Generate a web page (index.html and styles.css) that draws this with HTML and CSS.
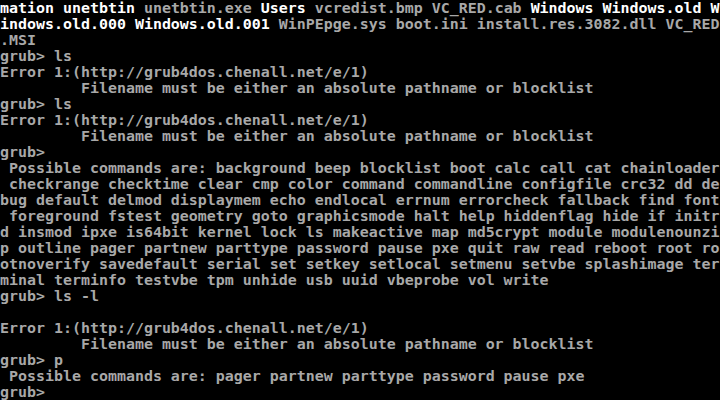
FILE: index.html
```html
<!DOCTYPE html>
<html>
<head>
<meta charset="utf-8">
<link rel="stylesheet" href="styles.css">
</head>
<body>
<pre class="console"><span class="hi">mation unetbtin</span> unetbtin.exe <span class="hi">Users</span> vcredist.bmp VC_RED.cab <span class="hi">Windows Windows.old W</span>
<span class="hi">indows.old.000 Windows.old.001</span> WinPEpge.sys boot.ini install.res.3082.dll VC_RED
.MSI
grub&gt; ls
Error 1:(http://grub4dos.chenall.net/e/1)
         Filename must be either an absolute pathname or blocklist
grub&gt; ls
Error 1:(http://grub4dos.chenall.net/e/1)
         Filename must be either an absolute pathname or blocklist
grub&gt;
 Possible commands are: background beep blocklist boot calc call cat chainloader
 checkrange checktime clear cmp color command commandline configfile crc32 dd de
bug default delmod displaymem echo endlocal errnum errorcheck fallback find font
 foreground fstest geometry goto graphicsmode halt help hiddenflag hide if initr
d insmod ipxe is64bit kernel lock ls makeactive map md5crypt module modulenounzi
p outline pager partnew parttype password pause pxe quit raw read reboot root ro
otnoverify savedefault serial set setkey setlocal setmenu setvbe splashimage ter
minal terminfo testvbe tpm unhide usb uuid vbeprobe vol write
grub&gt; ls -l

Error 1:(http://grub4dos.chenall.net/e/1)
         Filename must be either an absolute pathname or blocklist
grub&gt; p
 Possible commands are: pager partnew parttype password pause pxe
grub&gt;</pre>
</body>
</html>
```
FILE: styles.css
```css
html, body {
  margin: 0;
  padding: 0;
  background: #000;
  width: 720px;
  height: 400px;
  overflow: hidden;
}
.console {
  margin: 0;
  padding: 0;
  font-family: "DejaVu Sans Mono", "Liberation Mono", monospace;
  font-size: 14.95px;
  line-height: 16px;
  font-weight: bold;
  color: #a8a8a8;
  white-space: pre;
}
.hi {
  color: #ffffff;
}
```
